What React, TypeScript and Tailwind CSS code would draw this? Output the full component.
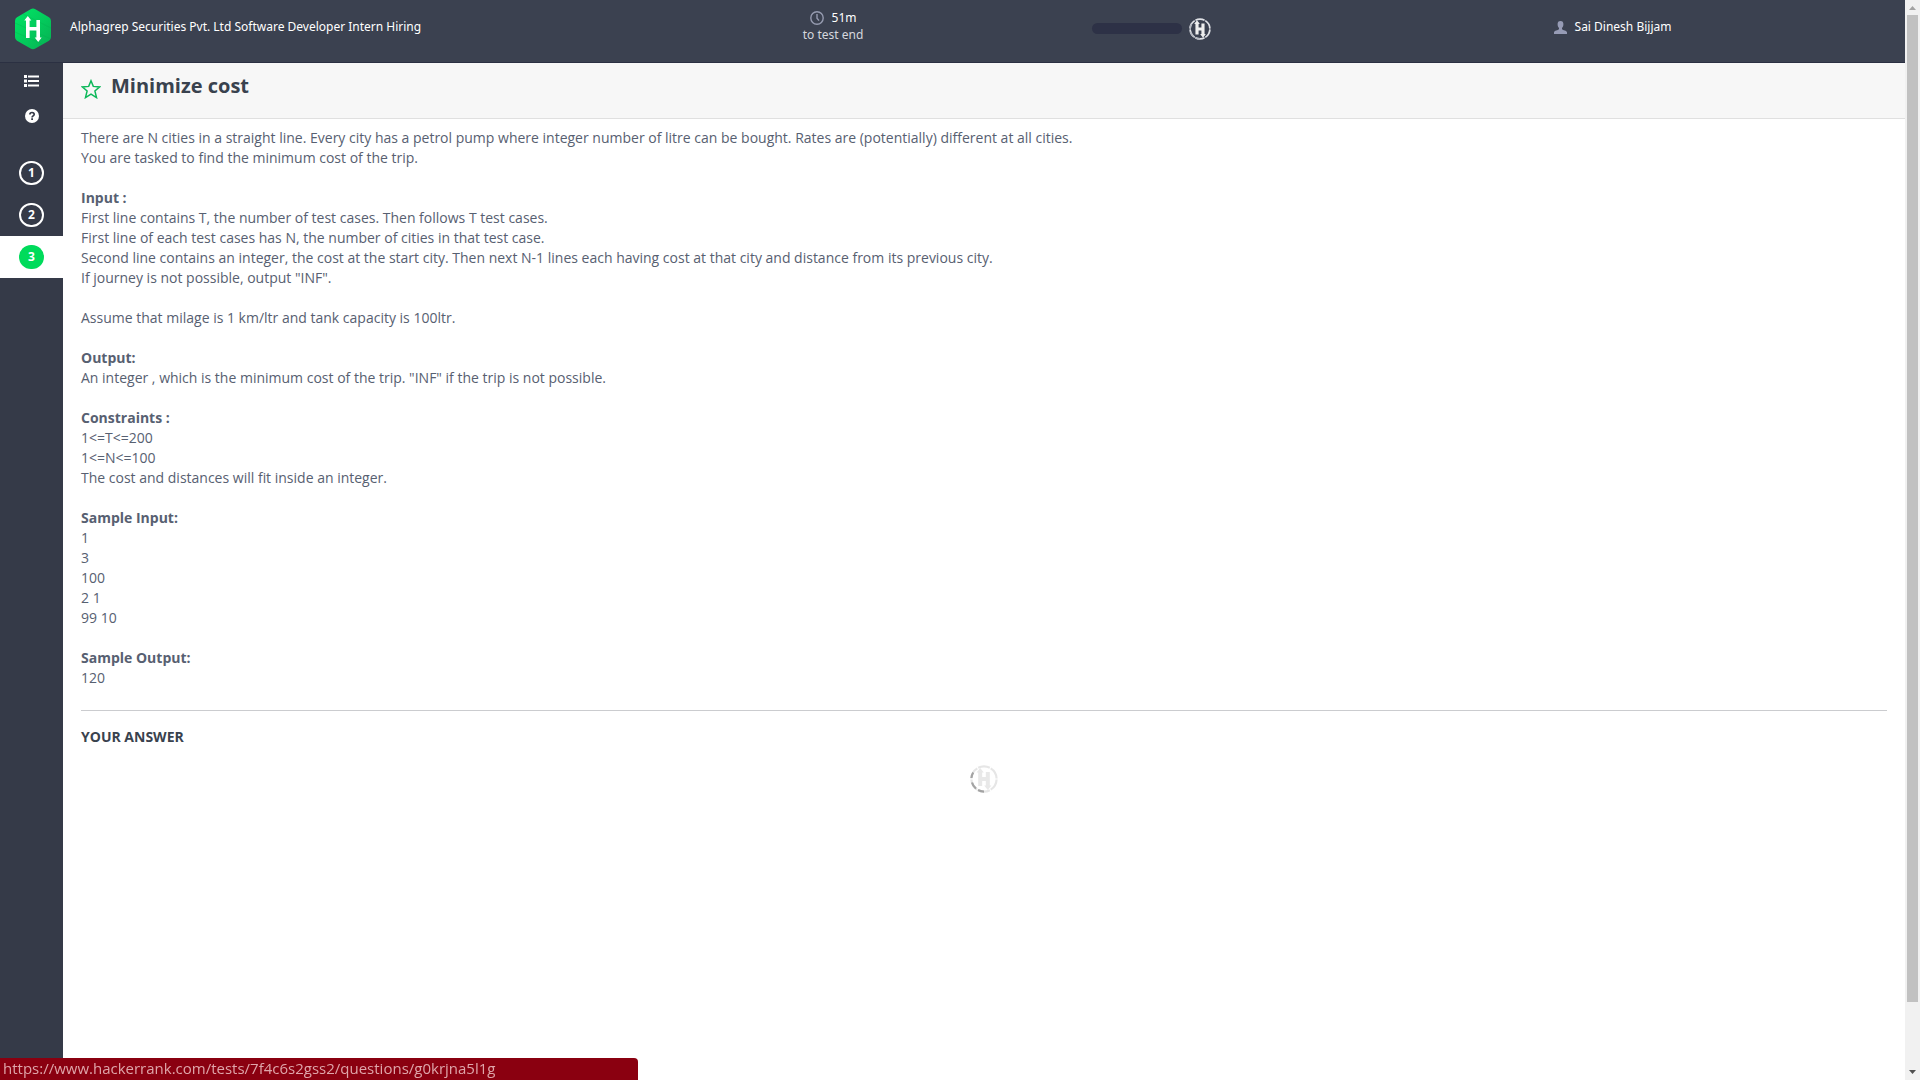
import type { ReactNode } from "react";

const statement: { text: string; bold?: boolean }[] = [
  { text: "There are N cities in a straight line. Every city has a petrol pump where integer number of litre can be bought. Rates are (potentially) different at all cities." },
  { text: "You are tasked to find the minimum cost of the trip." },
  { text: "" },
  { text: "Input :", bold: true },
  { text: "First line contains T, the number of test cases. Then follows T test cases." },
  { text: "First line of each test cases has N, the number of cities in that test case." },
  { text: "Second line contains an integer, the cost at the start city. Then next N-1 lines each having cost at that city and distance from its previous city." },
  { text: 'If journey is not possible, output "INF".' },
  { text: "" },
  { text: "Assume that milage is 1 km/ltr and tank capacity is 100ltr." },
  { text: "" },
  { text: "Output:", bold: true },
  { text: 'An integer , which is the minimum cost of the trip. "INF" if the trip is not possible.' },
  { text: "" },
  { text: "Constraints :", bold: true },
  { text: "1<=T<=200" },
  { text: "1<=N<=100" },
  { text: "The cost and distances will fit inside an integer." },
  { text: "" },
  { text: "Sample Input:", bold: true },
  { text: "1" },
  { text: "3" },
  { text: "100" },
  { text: "2 1" },
  { text: "99 10" },
  { text: "" },
  { text: "Sample Output:", bold: true },
  { text: "120" },
];

function Logo() {
  return (
    <svg viewBox="0 0 36 42" className="h-[42px] w-9" aria-hidden="true">
      <defs>
        <linearGradient id="hex" x1="0" y1="0" x2="1" y2="1">
          <stop offset="0" stopColor="#00e765" />
          <stop offset="1" stopColor="#07b053" />
        </linearGradient>
      </defs>
      <path d="M15.6 1.2Q18 -.4 20.4 1.2L34 9.2Q36 10.4 36 13V29Q36 31.600 34 32.800L20.400 40.600Q18 42 15.600 40.600L2 32.800Q0 31.600 0 29V13Q0 10.400 2 9.200Z" fill="url(#hex)" />
      <path d="M0 15 36 31M0 24 27 36M8 6 36 20" stroke="#00a84c" strokeOpacity=".25" strokeWidth="1" />
      <path d="M12.800 30V11M23.200 12V31M12.800 20.700H23.200" fill="none" stroke="#fff" strokeWidth="3.600" />
      <path d="M9.300 12.500 12.800 8 16.300 12.500ZM19.700 29.500 23.200 34 26.700 29.500Z" fill="#fff" />
    </svg>
  );
}

function HMark({ ring, arc, letter, className }: { ring: string; arc: string; letter: string; className: string }) {
  return (
    <svg viewBox="0 0 28 28" className={className} aria-hidden="true">
      <g fill="none" strokeWidth="2.200">
        <circle cx="14" cy="14" r="12.600" stroke={ring} pathLength="60" strokeDasharray="9.200 .8" strokeDashoffset="-.4" />
        <path d="M1.400 13A12.600 12.600 0 0 1 3.200 7.500M2 17.500A12.600 12.600 0 0 0 6 23.700M8 25A12.600 12.600 0 0 0 14 26.600" stroke={arc} />
      </g>
      <path d="M10.200 21V6M17.800 7V22M10.200 14H17.800" fill="none" stroke={letter} strokeWidth="4" />
      <path d="M6.600 7.500 10.200 3 13.800 7.500ZM14.200 20.500 17.800 25 21.400 20.500Z" fill={letter} />
    </svg>
  );
}

function QuestionLink({ n, active }: { n: number; active?: boolean }) {
  return (
    <a
      href={"#question-" + n}
      aria-current={active ? "page" : undefined}
      className={"flex h-[42px] items-center justify-center " + (active ? "bg-white" : "")}
    >
      <span
        className={
          "flex h-6 w-[25px] items-center justify-center rounded-full text-xs font-bold text-white " +
          (active ? "bg-[#00db5b]" : "border-2 border-white")
        }
      >
        {n}
      </span>
    </a>
  );
}

function IconButton({ label, children }: { label: string; children: ReactNode }) {
  return (
    <button type="button" aria-label={label} className="flex h-[35px] w-full items-center justify-center text-white">
      {children}
    </button>
  );
}

export default function App() {
  return (
    <div className="flex h-screen bg-white font-['Noto_Sans',sans-serif] text-sm text-[#576071]">
      <div className="flex min-w-0 flex-1 flex-col">
        <header className="flex h-[63px] shrink-0 border-b border-[#2b3042] bg-[#3b4150] text-xs text-white">
          <a href="#home" aria-label="Home" className="flex w-[66px] shrink-0 justify-center pt-2">
            <Logo />
          </a>
          <div className="grid flex-1 grid-cols-[608fr_318fr_318fr_595fr]">
            <div className="pt-[17px] pl-1 leading-5 whitespace-nowrap">Alphagrep Securities Pvt. Ltd Software Developer Intern Hiring</div>
            <div className="flex flex-col items-center pt-[9px] leading-[17px]">
              <div className="flex items-center gap-2">
                <svg viewBox="0 0 14 14" className="size-3.5" fill="none" stroke="#969bb0" strokeWidth="1.400" aria-hidden="true">
                  <circle cx="7" cy="7" r="6.200" />
                  <path d="M7 3V7.200L9 9.600" />
                </svg>
                51m
              </div>
              <div className="text-[#d5d7dd]">to test end</div>
            </div>
            <div className="flex items-center justify-center gap-[7px] pb-[5px]">
              <div role="progressbar" aria-label="Test progress" className="h-[11px] w-[90px] rounded-full bg-[#2d3146]" />
              <HMark className="size-[22px]" ring="#dfe1e6" arc="#b5b8c1" letter="#eeeeee" />
            </div>
            <div className="flex items-start justify-center gap-2 pt-[17px] pl-2.5 leading-5">
              <svg viewBox="0 0 13 13" className="mt-1 h-[13px] w-[13px]" fill="#969bb5" aria-hidden="true">
                <path d="M6.500 0C8.500 0 9.500 1.200 9.400 3.300 9.400 5 8.800 6.200 8 7V8.300C9 9.300 12.800 9.600 13 11.300V13H0V11.300C.2 9.600 4 9.300 5 8.300V7C4.200 6.200 3.600 5 3.600 3.300 3.500 1.200 4.500 0 6.500 0Z" />
              </svg>
              Sai Dinesh Bijjam
            </div>
          </div>
        </header>

        <div className="flex min-h-0 flex-1">
          <nav className="w-[63px] shrink-0 bg-[#353a48]">
            <IconButton label="All questions">
              <svg viewBox="0 0 15 12" className="h-3 w-[15px]" fill="currentColor" aria-hidden="true">
                <path d="M0 0H3V3H0ZM0 4.500H3V7.500H0ZM0 9H3V12H0ZM4 .5H15V2.500H4ZM4 5H15V7H4ZM4 9.500H15V11.500H4Z" />
              </svg>
            </IconButton>
            <IconButton label="Help">
              <svg viewBox="0 0 14 14" className="size-3.5" aria-hidden="true">
                <circle cx="7" cy="7" r="7" fill="#fff" />
                <path d="M4.900 5.400C4.900 2.900 9.200 2.900 9.200 5.300 9.200 6.900 7.100 6.800 7.100 8.400" fill="none" stroke="#353a48" strokeWidth="1.700" />
                <path d="M6.200 9.300H8V11.100H6.200Z" fill="#353a48" />
              </svg>
            </IconButton>
            <div className="mt-[19px]">
              <QuestionLink n={1} />
              <QuestionLink n={2} />
              <QuestionLink n={3} active />
            </div>
          </nav>

          <main className="min-w-0 flex-1">
            <div className="flex h-14 gap-2.5 border-b border-[#e0e0e0] bg-[#f7f7f7] px-[18px]">
              <button type="button" aria-label="Bookmark question" className="mt-4 size-5">
                <svg viewBox="0 0 20 20" className="size-5" fill="none" stroke="#0db85a" strokeWidth="1.500" aria-hidden="true">
                  <path d="M10 1.800 12.300 7.400 18.700 7.900 13.900 12 15.500 18.600 10 15.200 4.500 18.600 6.100 12 1.300 7.900 7.700 7.400Z" />
                </svg>
              </button>
              <h1 className="pt-[9px] font-['Open_Sans',sans-serif] text-xl leading-7 font-bold text-[#39424e]">Minimize cost</h1>
            </div>
            <div className="px-[18px] pt-[9px] font-['Open_Sans',sans-serif]">
              <div className="leading-5">
                {statement.map((line, i) => (
                  <p key={i} className={"min-h-5 " + (line.bold ? "font-bold" : "")}>
                    {line.text}
                  </p>
                ))}
              </div>
              <hr className="mt-[22px] border-[#cbcccf]" />
              <h2 className="mt-4 leading-5 font-bold text-[#39424e]">YOUR ANSWER</h2>
              <div role="status" aria-label="Loading" className="mt-[18px] flex justify-center">
                <HMark className="size-7" ring="#e6e6e6" arc="#a3a3a3" letter="#e8e8e8" />
              </div>
            </div>
          </main>
        </div>
      </div>

      <div aria-hidden="true" className="flex w-[15px] shrink-0 flex-col items-center justify-between bg-[#f1f1f1]">
        <svg viewBox="0 0 15 15" className="h-[15px] w-[15px] shrink-0">
          <path d="M4 10 7.500 6 11 10Z" fill="#a3a3a3" />
        </svg>
        <div className="flex w-full flex-1 flex-col px-0.5">
          <div className="h-[94%] bg-[#c1c1c1]" />
        </div>
        <svg viewBox="0 0 15 15" className="h-[15px] w-[15px] shrink-0">
          <path d="M4 5 11 5 7.500 9Z" fill="#505050" />
        </svg>
      </div>

      <div className="fixed bottom-0 left-0 h-[22px] w-[638px] rounded-tr bg-[#8a0010] pl-[3px] font-['Open_Sans',sans-serif] text-[15px] leading-[21px] text-[#dfa5aa]">
        https://www.hackerrank.com/tests/7f4c6s2gss2/questions/g0krjna5l1g
      </div>
    </div>
  );
}
